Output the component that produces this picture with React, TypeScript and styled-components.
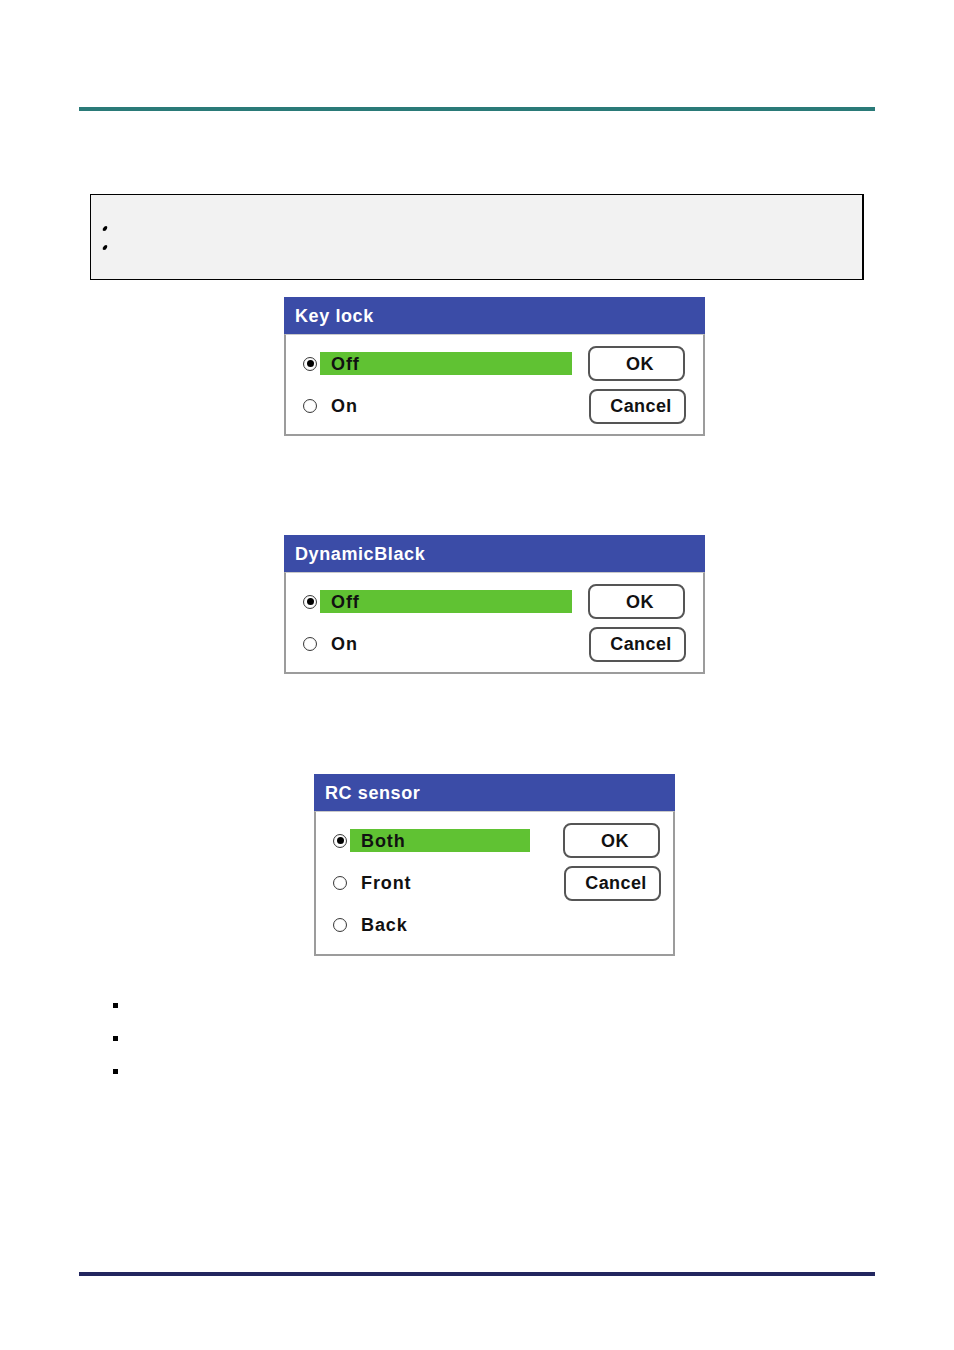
import React from 'react';
import styled, { createGlobalStyle } from 'styled-components';

const GlobalStyle = createGlobalStyle`
  body {
    margin: 0;
    background: #fff;
    font-family: 'Liberation Sans', Arial, sans-serif;
  }
`;

const Page = styled.div`
  width: 954px;
  min-height: 1350px;
  padding: 0 79px;
  box-sizing: border-box;
  display: flex;
  flex-direction: column;
`;

const Rule = styled.div<{ $color: string; $top: number }>`
  height: 4px;
  margin-top: ${(p) => p.$top}px;
  background: ${(p) => p.$color};
`;

const NoteBox = styled.div`
  margin: 83px 0 0 11px;
  width: 774px;
  height: 86px;
  box-sizing: border-box;
  border: 1px solid #000;
  border-right-width: 2px;
  background: #f2f2f2;
  padding: 31px 0 0 12px;
  display: flex;
  flex-direction: column;
  gap: 14px;
`;

const NoteDot = styled.span`
  display: block;
  width: 4px;
  height: 5px;
  border-radius: 50%;
  background: #000;
  transform: skewX(-20deg);
`;

const Dialog = styled.div<{ $top: number; $left: number; $width: number }>`
  margin: ${(p) => p.$top}px 0 0 ${(p) => p.$left}px;
  width: ${(p) => p.$width}px;
  display: flex;
  flex-direction: column;
`;

const TitleBar = styled.div`
  height: 37px;
  background: #3b4ca7;
  color: #fff;
  font-size: 18px;
  font-weight: bold;
  letter-spacing: 0.6px;
  display: flex;
  align-items: center;
  padding: 1px 0 0 11px;
  box-sizing: border-box;
`;

const Body = styled.div<{ $padTop: number; $padBottom: number; $padRight: number }>`
  border: 2px solid #9c9c9c;
  border-top: 1px solid #c9c9c9;
  padding: ${(p) => p.$padTop}px ${(p) => p.$padRight}px ${(p) => p.$padBottom}px 17px;
  display: flex;
  flex-direction: column;
`;

const Row = styled.div<{ $height: number }>`
  height: ${(p) => p.$height}px;
  display: flex;
  align-items: center;
  justify-content: space-between;
`;

const Option = styled.div`
  display: flex;
  align-items: center;
  gap: 3px;
`;

const Radio = styled.span<{ $checked: boolean }>`
  width: 14px;
  height: 14px;
  box-sizing: border-box;
  border-radius: 50%;
  border: 1.5px solid #3a3a3a;
  background: radial-gradient(circle, #fff 55%, #d8d8d8 100%);
  display: flex;
  align-items: center;
  justify-content: center;

  &::after {
    content: '';
    width: 7px;
    height: 7px;
    border-radius: 50%;
    background: #000;
    display: ${(p) => (p.$checked ? 'block' : 'none')};
  }
`;

const Label = styled.span<{ $selected: boolean; $width: number }>`
  width: ${(p) => p.$width}px;
  height: 23px;
  box-sizing: border-box;
  padding: 1px 0 0 11px;
  display: flex;
  align-items: center;
  background: ${(p) => (p.$selected ? '#60c233' : 'transparent')};
  color: #111;
  font-size: 18px;
  font-weight: bold;
  letter-spacing: 0.9px;
`;

const Button = styled.div<{ $shift?: number }>`
  width: 97px;
  height: 35px;
  box-sizing: border-box;
  border: 2px solid #555;
  border-radius: 8px;
  background: #fff;
  display: flex;
  align-items: center;
  justify-content: center;
  padding: 1px 0 0 7px;
  margin-right: ${(p) => -(p.$shift ?? 0)}px;
  color: #111;
  font-size: 18px;
  font-weight: bold;
  letter-spacing: 0.4px;
`;

const SquareList = styled.div`
  margin: 47px 0 0 34px;
  display: flex;
  flex-direction: column;
  gap: 28px;
`;

const Square = styled.span`
  display: block;
  width: 5px;
  height: 5px;
  background: #000;
`;

interface DialogProps {
  title: string;
  options: string[];
  top: number;
  left: number;
  width: number;
  labelWidth: number;
  padTop: number;
  padBottom: number;
  padRight: number;
}

const buttons = ['OK', 'Cancel'];

const SettingDialog = ({
  title,
  options,
  top,
  left,
  width,
  labelWidth,
  padTop,
  padBottom,
  padRight,
}: DialogProps) => (
  <Dialog $top={top} $left={left} $width={width}>
    <TitleBar>{title}</TitleBar>
    <Body $padTop={padTop} $padBottom={padBottom} $padRight={padRight}>
      {options.map((opt, i) => (
        <Row key={opt} $height={i === 0 ? 43 : 42}>
          <Option>
            <Radio $checked={i === 0} />
            <Label $selected={i === 0} $width={labelWidth}>
              {opt}
            </Label>
          </Option>
          {buttons[i] && <Button $shift={i}>{buttons[i]}</Button>}
        </Row>
      ))}
    </Body>
  </Dialog>
);

export default function App() {
  return (
    <>
      <GlobalStyle />
      <Page>
        <Rule $color="#2a7a78" $top={107} />
        <NoteBox>
          <NoteDot />
          <NoteDot />
        </NoteBox>
        <SettingDialog
          title="Key lock"
          options={['Off', 'On']}
          top={17}
          left={205}
          width={421}
          labelWidth={252}
          padTop={7}
          padBottom={7}
          padRight={18}
        />
        <SettingDialog
          title="DynamicBlack"
          options={['Off', 'On']}
          top={99}
          left={205}
          width={421}
          labelWidth={252}
          padTop={7}
          padBottom={7}
          padRight={18}
        />
        <SettingDialog
          title="RC sensor"
          options={['Both', 'Front', 'Back']}
          top={100}
          left={235}
          width={361}
          labelWidth={180}
          padTop={7}
          padBottom={8}
          padRight={13}
        />
        <SquareList>
          <Square />
          <Square />
          <Square />
        </SquareList>
        <Rule $color="#22265f" $top={198} />
      </Page>
    </>
  );
}
